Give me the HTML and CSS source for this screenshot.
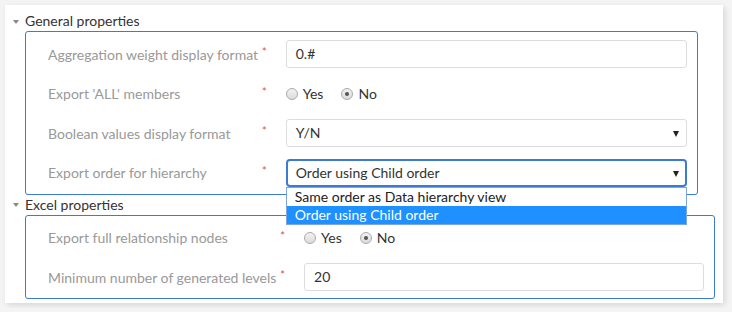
FILE: index.html
```html
<!DOCTYPE html>
<html lang="en">
<head>
  <meta charset="UTF-8">
  <title>Export properties</title>
  <link rel="stylesheet" href="styles.css">
</head>
<body>

  <div class="panel">

    <!-- General -->
    <div class="group-head"><span class="caret"></span>General properties</div>
    <div class="group general">
      <label class="field-label">Aggregation weight display format</label>
      <span class="req">*</span>
      <div class="input">0.#</div>

      <label class="field-label">Export 'ALL' members</label>
      <span class="req">*</span>
      <div class="radios">
        <span class="radio"></span><span class="radio-text">Yes</span>
        <span class="radio checked"></span><span class="radio-text">No</span>
      </div>

      <label class="field-label">Boolean values display format</label>
      <span class="req">*</span>
      <div class="input select">Y/N<span class="arrow"></span></div>

      <label class="field-label">Export order for hierarchy</label>
      <span class="req">*</span>
      <div class="input select open">Order using Child order<span class="arrow"></span>
        <ul class="dropdown">
          <li>Same order as Data hierarchy view</li>
          <li class="active">Order using Child order</li>
        </ul>
      </div>
    </div>

    <!-- Excel -->
    <div class="group-head"><span class="caret"></span>Excel properties</div>
    <div class="group excel">
      <label class="field-label">Export full relationship nodes</label>
      <span class="req">*</span>
      <div class="radios">
        <span class="radio"></span><span class="radio-text">Yes</span>
        <span class="radio checked"></span><span class="radio-text">No</span>
      </div>

      <label class="field-label">Minimum number of generated levels</label>
      <span class="req">*</span>
      <div class="input">20</div>
    </div>

  </div>

</body>
</html>
```

FILE: styles.css
```css
html, body {
  margin: 0;
  padding: 0;
  background: #f4f4f4;
  font-family: 'Lato', 'Liberation Sans', sans-serif;
  font-size: 14px;
  color: #333;
}

body {
  padding: 5px;
}

.panel {
  width: 718px;
  height: 292px;
  padding-top: 6px;
  background: #fff;
  box-shadow: 2px 2px 6px rgba(0, 0, 0, 0.12);
}

.group-head {
  display: flex;
  align-items: center;
  height: 20px;
  line-height: 20px;
  padding-left: 8px;
  color: #333;
}

.caret {
  width: 0;
  height: 0;
  border-left: 3px solid transparent;
  border-right: 3px solid transparent;
  border-top: 4px solid #888;
  margin-right: 6px;
  margin-top: 1px;
}

.group {
  display: grid;
  grid-template-columns: auto auto 1fr;
  grid-auto-rows: 28px;
  row-gap: 11.5px;
  align-items: center;
  margin-left: 20px;
  padding: 8px 10px 7px 22px;
  border: 1px solid #3b7bd4;
  border-radius: 3px;
}

.general { width: 639px; }
.excel { width: 656px; }

.field-label {
  color: #999;
  white-space: nowrap;
}

.req {
  align-self: start;
  margin: 5px 19px 0 4px;
  color: #e5484d;
  font-size: 11px;
}

.input {
  position: relative;
  height: 26px;
  line-height: 26px;
  padding: 0 9px;
  border: 1px solid #ddd;
  border-radius: 3px;
  color: #333;
  background: #fff;
}

.select .arrow {
  position: absolute;
  right: 7px;
  top: 11px;
  width: 0;
  height: 0;
  border-left: 3px solid transparent;
  border-right: 3px solid transparent;
  border-top: 6px solid #222;
}

.select.open {
  border: 2px solid #3b7bd4;
  border-radius: 4px;
  height: 24px;
  line-height: 24px;
  padding: 0 8px;
}

.select.open .arrow {
  right: 6px;
  top: 10px;
}

.dropdown {
  position: absolute;
  top: 26px;
  left: -2px;
  right: -2px;
  margin: 0;
  padding: 0;
  list-style: none;
  background: #fff;
  border: 1px solid #7fa6dc;
  z-index: 5;
}

.dropdown li {
  height: 18px;
  line-height: 18px;
  padding: 0 8px;
  color: #222;
}

.dropdown li.active {
  background: #1e90ff;
  color: #fff;
}

.radios {
  display: flex;
  align-items: center;
}

.radio {
  width: 10px;
  height: 10px;
  border: 1px solid #aaa;
  border-radius: 50%;
  background: linear-gradient(#f2f2f2, #dcdcdc);
  margin-right: 5px;
  position: relative;
}

.radio.checked::after {
  content: '';
  position: absolute;
  top: 3px;
  left: 3px;
  width: 4px;
  height: 4px;
  border-radius: 50%;
  background: #555;
}

.radio-text {
  margin-right: 18px;
  color: #333;
}
```
